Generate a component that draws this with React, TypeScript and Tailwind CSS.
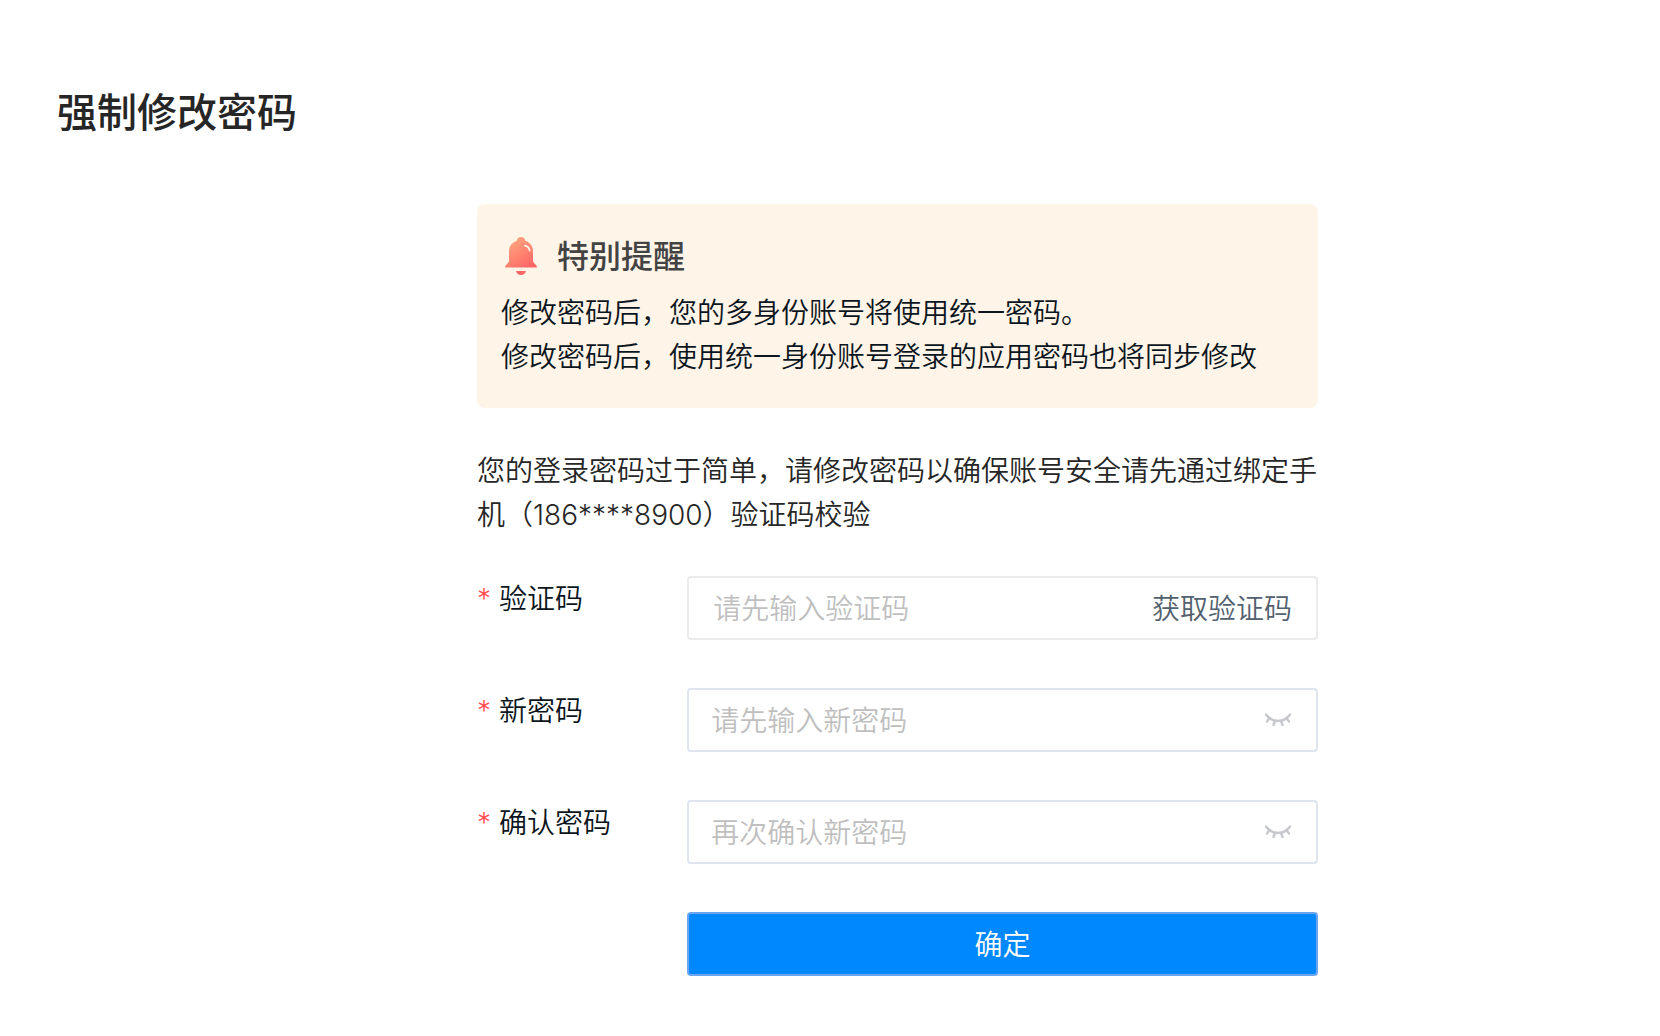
import { useState } from "react";

function BellIcon() {
  return (
    <svg viewBox="0 0 40 40" className="size-10 shrink-0" aria-hidden="true">
      <defs>
        <linearGradient id="bell" x1="8" y1="4" x2="30" y2="36" gradientUnits="userSpaceOnUse">
          <stop offset="0" stopColor="#ffa680" />
          <stop offset="0.85" stopColor="#fe6664" />
        </linearGradient>
      </defs>
      <path
        fill="url(#bell)"
        d="M20 0c-2.400 0-4 1.500-4.300 3.700C11 5.400 8 9.200 8 14.500v9C8 26.400 4 27.600 4 30.500h32c0-2.900-4-4.100-4-7v-9c0-5.300-3-9.100-7.700-10.800C24 1.500 22.400 0 20 0z"
      />
      <path fill="#fe6664" d="M15 34h10c-.6 2.500-2.600 4-5 4s-4.400-1.500-5-4z" />
      <path d="M24 8.700c2.700.7 4.300 2.400 4.700 5" fill="none" stroke="#fff4e8" strokeWidth="1.800" strokeLinecap="round" />
    </svg>
  );
}

function ClosedEyeIcon() {
  return (
    <svg
      viewBox="0 0 28 28"
      className="size-7"
      fill="none"
      stroke="#c6c8cc"
      strokeWidth="2.400"
      strokeLinecap="round"
      aria-hidden="true"
    >
      <path d="M2 8.500c2.800 4 7 6.500 12 6.500s9.200-2.500 12-6.500" />
      <path d="M5.500 12l-2.500 3.500M11 15l-1.500 4M17 15l1.500 4M22.500 12l2.500 3.500" />
    </svg>
  );
}

function FieldLabel({ htmlFor, text }: { htmlFor: string; text: string }) {
  return (
    <label htmlFor={htmlFor} className="flex w-1/4 shrink-0 gap-2 pt-px text-[#0b1520]">
      <span className="text-[#ff4d4f]">*</span>
      {text}
    </label>
  );
}

function PasswordField({ id, label, placeholder }: { id: string; label: string; placeholder: string }) {
  const [visible, setVisible] = useState(false);
  return (
    <div className="flex items-start">
      <FieldLabel htmlFor={id} text={label} />
      <div className="flex h-16 min-w-0 flex-1 items-center rounded border-2 border-[#dfe4ee] pr-6 pl-[22px]">
        <input
          id={id}
          type={visible ? "text" : "password"}
          placeholder={placeholder}
          className="min-w-0 flex-1 bg-transparent pt-px outline-none placeholder:text-[#bfbfbf]"
        />
        <button type="button" aria-label="显示密码" onClick={() => setVisible(!visible)}>
          <ClosedEyeIcon />
        </button>
      </div>
    </div>
  );
}

export default function App() {
  return (
    <main className="min-h-screen bg-white px-[57px] pt-20 pb-14 font-['Inter','Noto_Sans_CJK_SC',sans-serif] text-[28px] leading-[44px] font-[350] text-[#262626]">
      <h1 className="text-[40px] leading-[66px] font-medium">强制修改密码</h1>
      <div className="mt-[58px] grid grid-cols-[420fr_841fr_285fr]">
        <div className="col-start-2 flex min-w-0 flex-col">
          <section className="rounded-lg bg-[#fff4e8] px-6 pt-[30px] pb-[29px] text-[#0b1520]">
            <h2 className="mb-[11px] flex items-center gap-4 text-[32px] leading-[46px] font-medium text-[#434343]">
              <BellIcon />
              特别提醒
            </h2>
            <p>修改密码后，您的多身份账号将使用统一密码。</p>
            <p>修改密码后，使用统一身份账号登录的应用密码也将同步修改</p>
          </section>

          <p className="mt-[41px] mb-[39px]">
            您的登录密码过于简单，请修改密码以确保账号安全请先通过绑定手机（186****8900）验证码校验
          </p>

          <form className="flex flex-col gap-12" onSubmit={(e) => e.preventDefault()}>
            <div className="flex items-start">
              <FieldLabel htmlFor="code" text="验证码" />
              <div className="flex h-16 min-w-0 flex-1 items-center rounded border-2 border-[#ebebeb] px-6">
                <input
                  id="code"
                  type="text"
                  placeholder="请先输入验证码"
                  className="min-w-0 flex-1 bg-transparent pt-px outline-none placeholder:text-[#bfbfbf]"
                />
                <button type="button" className="shrink-0 pt-px text-[#53606e]">
                  获取验证码
                </button>
              </div>
            </div>
            <PasswordField id="new-password" label="新密码" placeholder="请先输入新密码" />
            <PasswordField id="confirm-password" label="确认密码" placeholder="再次确认新密码" />
            <button
              type="submit"
              className="h-16 w-3/4 self-end rounded border-2 border-[#6ba5f2] bg-[#0088ff] pt-px text-white"
            >
              确定
            </button>
          </form>
        </div>
      </div>
    </main>
  );
}
